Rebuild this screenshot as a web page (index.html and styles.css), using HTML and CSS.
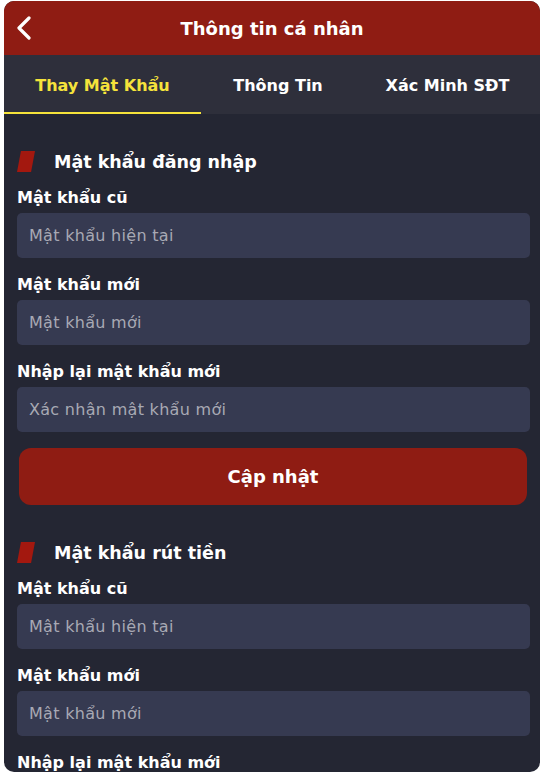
FILE: index.html
```html
<!DOCTYPE html>
<html lang="vi">
<head>
<meta charset="utf-8">
<title>Thông tin cá nhân</title>
<link rel="stylesheet" href="styles.css">
</head>
<body>
<div class="card">
  <header class="topbar">
    <button class="back" aria-label="Quay lại">
      <svg width="16" height="24" viewBox="0 0 16 24"><polyline points="13,2 3,12 13,22" fill="none" stroke="#fff" stroke-width="3.2" stroke-linecap="round" stroke-linejoin="round"/></svg>
    </button>
    <h1 class="title">Thông tin cá nhân</h1>
  </header>
  <nav class="tabs">
    <div class="tab tab-1 active">Thay Mật Khẩu</div>
    <div class="tab tab-2">Thông Tin</div>
    <div class="tab tab-3">Xác Minh SĐT</div>
  </nav>
  <main class="content">
    <section class="group">
      <h2 class="heading"><span class="mark"></span>Mật khẩu đăng nhập</h2>
      <label class="label">Mật khẩu cũ</label>
      <div class="input">Mật khẩu hiện tại</div>
      <label class="label">Mật khẩu mới</label>
      <div class="input">Mật khẩu mới</div>
      <label class="label">Nhập lại mật khẩu mới</label>
      <div class="input">Xác nhận mật khẩu mới</div>
      <button class="submit">Cập nhật</button>
    </section>
    <section class="group group-2">
      <h2 class="heading"><span class="mark"></span>Mật khẩu rút tiền</h2>
      <label class="label">Mật khẩu cũ</label>
      <div class="input">Mật khẩu hiện tại</div>
      <label class="label">Mật khẩu mới</label>
      <div class="input">Mật khẩu mới</div>
      <label class="label">Nhập lại mật khẩu mới</label>
      <div class="input">Xác nhận mật khẩu mới</div>
    </section>
  </main>
</div>
</body>
</html>
```
FILE: styles.css
```css
* { box-sizing: border-box; }
html, body { margin: 0; padding: 0; background: #fff; }
body { font-family: "DejaVu Sans", "Noto Sans", sans-serif; }
.card {
  margin: 1px 1px 0 4px;
  width: 536px;
  height: 771px;
  border-radius: 10px;
  overflow: hidden;
  background: #242633;
  display: flex;
  flex-direction: column;
}
.topbar {
  flex-shrink: 0;
  height: 54px;
  background: #8f1c13;
  display: flex;
  align-items: center;
  justify-content: center;
  position: relative;
}
.back {
  position: absolute;
  left: 12px;
  top: 15px;
  border: 0;
  background: none;
  padding: 0;
  width: 16px;
  height: 24px;
}
.title {
  margin: 0;
  color: #fff;
  font-size: 18px;
  font-weight: 700;
  padding-top: 1px;
}
.tabs {
  flex-shrink: 0;
  height: 59px;
  background: #2e2f3b;
  display: flex;
}
.tab {
  display: flex;
  align-items: center;
  justify-content: center;
  color: #fff;
  font-size: 16px;
  font-weight: 700;
  border-bottom: 2px solid transparent;
  padding-top: 3px;
}
.tab-1 { width: 197px; }
.tab-2 { width: 154px; }
.tab-3 { flex: 1; }
.tab.active { color: #f5e33b; border-bottom-color: #f5e33b; }
.content {
  flex-shrink: 0;
  padding: 36px 10px 0 13px;
  display: flex;
  flex-direction: column;
}
.group { display: flex; flex-direction: column; flex-shrink: 0; }
.group-2 { margin-top: 36px; }
.heading {
  margin: 0 0 13px;
  height: 24px;
  display: flex;
  align-items: center;
  gap: 19px;
  color: #fff;
  font-size: 17.5px;
  font-weight: 700;
}
.mark {
  width: 18px;
  height: 21px;
  background: #a3180f;
  clip-path: polygon(22% 0, 100% 0, 78% 100%, 0 100%);
  margin-top: -1px;
}
.label {
  display: block;
  height: 22px;
  line-height: 22px;
  color: #fff;
  font-size: 16px;
  font-weight: 700;
  margin-bottom: 4px;
}
.input {
  flex-shrink: 0;
  height: 45px;
  border-radius: 5px;
  background: #363a51;
  color: #a8a9b4;
  font-size: 16px;
  letter-spacing: 0.3px;
  font-weight: 400;
  display: flex;
  align-items: center;
  padding-left: 12px;
  margin-bottom: 16px;
}
.submit {
  flex-shrink: 0;
  margin: 0 3px 0 2px;
  height: 57px;
  border: 0;
  border-radius: 12px;
  background: #8f1c13;
  color: #fff;
  font-family: inherit;
  font-size: 18px;
  font-weight: 700;
}
```
